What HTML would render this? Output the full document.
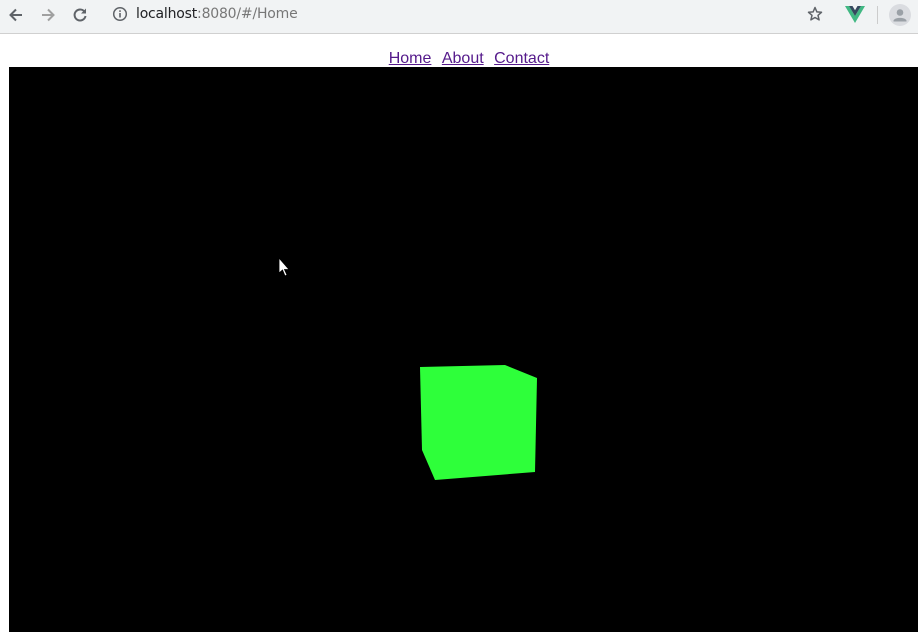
<!DOCTYPE html>
<html><head><meta charset="utf-8"><style>
html,body{margin:0;padding:0;width:918px;height:632px;overflow:hidden;background:#fff;font-family:"Liberation Sans",sans-serif}
#bar{position:absolute;left:0;top:0;width:918px;height:33px;background:#f1f3f4;border-bottom:1px solid #d0d0d0}
#url{position:absolute;left:136px;top:6px;font-size:14px;color:#202124;font-family:"DejaVu Sans","Liberation Sans",sans-serif;letter-spacing:-0.2px}
#url span{color:#777}
#nav{position:absolute;top:50px;left:10px;width:918px;text-align:center;font-size:16px}
#nav a{color:#551a8b;text-decoration:underline;margin:0 3px}
#canvas{position:absolute;left:9px;top:67px;width:909px;height:565px;background:#000}
svg{position:absolute}
</style></head><body>
<div id="bar">
<svg style="left:6px;top:5px" width="20" height="20" viewBox="0 0 20 20"><path d="M16 10H5M10 4.5L4.5 10 10 15.5" stroke="#5f6368" stroke-width="2" fill="none"/></svg>
<svg style="left:38px;top:5px" width="20" height="20" viewBox="0 0 20 20"><path d="M4 10H15M10 4.5L15.5 10 10 15.5" stroke="#a0a0a0" stroke-width="2" fill="none"/></svg>
<svg style="left:70px;top:5px" width="20" height="20" viewBox="0 0 20 20"><path d="M15 7.5A5.5 5.5 0 1 0 15.5 11" stroke="#5f6368" stroke-width="2" fill="none"/><path d="M16 3.5V8.5H11Z" fill="#5f6368"/></svg>
<svg style="left:112px;top:6px" width="16" height="16" viewBox="0 0 16 16"><circle cx="8" cy="8" r="6.3" stroke="#5f6368" stroke-width="1.5" fill="none"/><rect x="7.2" y="7" width="1.6" height="4.5" fill="#5f6368"/><rect x="7.2" y="4.3" width="1.6" height="1.6" fill="#5f6368"/></svg>
<div id="url">localhost<span>:8080/#/Home</span></div>
<svg style="left:806px;top:5px" width="18" height="18" viewBox="0 0 18 18"><path d="M9 2.5L10.9 6.9 15.5 7.3 12 10.3 13.1 14.9 9 12.5 4.9 14.9 6 10.3 2.5 7.3 7.1 6.9Z" stroke="#5f6368" stroke-width="1.5" fill="none" stroke-linejoin="round"/></svg>
<svg style="left:845px;top:6px" width="20" height="17" viewBox="0 0 20 17"><path d="M0 0H4L10 10 16 0H20L10 17Z" fill="#41b883"/><path d="M4 0H7.5L10 4.3 12.5 0H16L10 10Z" fill="#35495e"/></svg>
<div style="position:absolute;left:877px;top:6px;width:1px;height:18px;background:#ccc"></div>
<svg style="left:889px;top:4px" width="22" height="22" viewBox="0 0 22 22"><circle cx="11" cy="11" r="11" fill="#dadce0"/><circle cx="11" cy="8.5" r="3.3" fill="#9aa0a6"/><path d="M4.5 16.5C6 13 16 13 17.5 16.5V17.5H4.5Z" fill="#9aa0a6"/></svg>
</div>
<div id="nav"><a>Home</a> <a>About</a> <a>Contact</a></div>
<div id="canvas"></div>
<svg style="left:0;top:0" width="918" height="632"><polygon points="420,367 505,365 537,378 535,472 435,480 422,450" fill="#2eff3a"/>
<path d="M279 258V273L282.5 270 285 276 287 275 284.5 269.5H289Z" fill="#fff" stroke="#000" stroke-width="0.8"/></svg>
</body></html>
